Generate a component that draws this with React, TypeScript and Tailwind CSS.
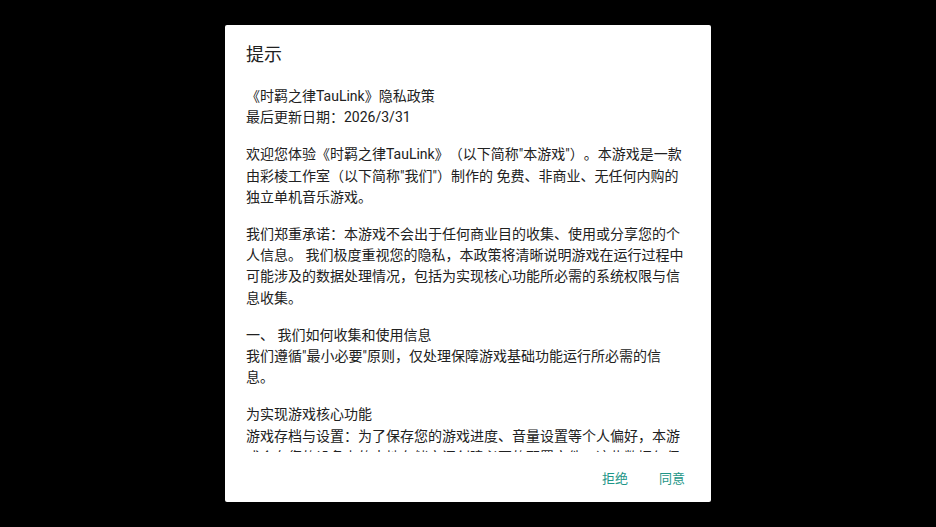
import React from "react";

const paragraphs: string[][] = [
  ["《时羁之律TauLink》隐私政策", "最后更新日期：2026/3/31"],
  [
    "欢迎您体验《时羁之律TauLink》（以下简称\"本游戏\"）。本游戏是一款由彩棱工作室（以下简称\"我们\"）制作的 免费、非商业、无任何内购的独立单机音乐游戏。",
  ],
  [
    "我们郑重承诺：本游戏不会出于任何商业目的收集、使用或分享您的个人信息。 我们极度重视您的隐私，本政策将清晰说明游戏在运行过程中可能涉及的数据处理情况，包括为实现核心功能所必需的系统权限与信息收集。",
  ],
  [
    "一、 我们如何收集和使用信息",
    "我们遵循\"最小必要\"原则，仅处理保障游戏基础功能运行所必需的信息。",
  ],
  [
    "为实现游戏核心功能",
    "游戏存档与设置：为了保存您的游戏进度、音量设置等个人偏好，本游戏会在您的设备上的本地存储空间创建必要的配置文件，这些数据仅保存在您的设备本地，不会上传至任何服务器。",
  ],
];

export default function App() {
  return (
    <div
      className="w-[936px] h-[527px] bg-black flex items-center justify-center [text-spacing-trim:space-all]"
      style={{ fontFamily: 'Roboto, "Noto Sans CJK SC", sans-serif' }}
    >
      <div className="w-[486px] h-[477px] bg-white rounded-[2px] flex flex-col">
        <div className="pt-[18px] pl-[21px] text-[18px] leading-[24px] text-[#212121]">
          提示
        </div>
        <div className="mt-[19px] flex-1 overflow-hidden pl-[21px] pr-[23px] text-[14px] leading-[21.3px] text-[#212121]">
          {paragraphs.map((p, i) => (
            <div key={i} className="mb-[15.7px]">
              {p.map((line, j) => (
                <div key={j}>{line}</div>
              ))}
            </div>
          ))}
        </div>
        <div className="h-[50px] pt-[3px] flex items-center justify-end gap-[31px] pr-[26px] text-[13px] leading-[20px] text-[#1e9688]">
          <span>拒绝</span>
          <span>同意</span>
        </div>
      </div>
    </div>
  );
}
